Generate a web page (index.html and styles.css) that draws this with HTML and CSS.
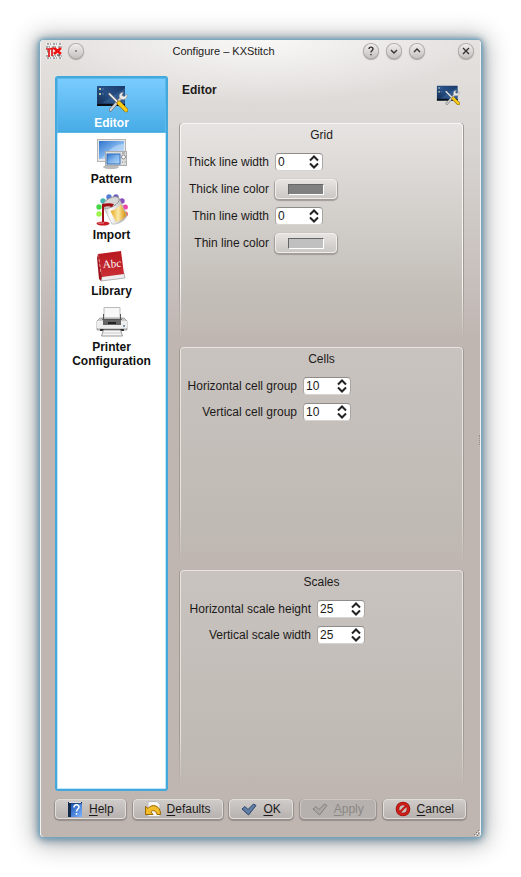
FILE: index.html
```html
<!DOCTYPE html>
<html lang="en">
<head>
<meta charset="utf-8">
<title>Configure – KXStitch</title>
<link rel="stylesheet" href="styles.css">
</head>
<body>
<svg class="defs" aria-hidden="true">
  <defs>
    <linearGradient id="screen" x1="0" y1="1" x2="1" y2="0"><stop offset="0" stop-color="#142c4c"/><stop offset=".5" stop-color="#264f86"/><stop offset="1" stop-color="#1a3a68"/></linearGradient>
    <linearGradient id="display" x1="0" y1="0" x2="1" y2="1"><stop offset="0" stop-color="#2f74cc"/><stop offset=".5" stop-color="#7fb4ec"/><stop offset="1" stop-color="#b4d8fa"/></linearGradient>
    <linearGradient id="gold" x1="0" y1="0" x2="1" y2="0"><stop offset="0" stop-color="#e9a51a"/><stop offset=".5" stop-color="#fbe9a8"/><stop offset="1" stop-color="#d99000"/></linearGradient>
    <linearGradient id="can" x1="0" y1="0" x2="1" y2="0"><stop offset="0" stop-color="#b5b5b5"/><stop offset=".3" stop-color="#ffffff"/><stop offset="1" stop-color="#a5a5a5"/></linearGradient>
    <linearGradient id="red" x1="0" y1="0" x2="0" y2="1"><stop offset="0" stop-color="#b81820"/><stop offset="1" stop-color="#c92f35"/></linearGradient>
    <linearGradient id="blue" x1="0" y1="0" x2="1" y2="1"><stop offset="0" stop-color="#1c54b4"/><stop offset="1" stop-color="#7db4ff"/></linearGradient>
    <symbol id="tools" viewBox="0 0 32 32">
      <rect x="1" y="4" width="28" height="20" fill="url(#screen)"/>
      <path d="M6 21 29 6v15z" fill="#4174ac" opacity=".4"/>
      <rect x="1" y="22" width="28" height="2" fill="#0a0d14"/>
      <path d="M3 7h2M3 12h2" stroke="#b5c6a8" stroke-width="2"/><path d="M6 7h2M6 12h2" stroke="#587ca8"/>
      <path d="M14.500 28 25 16" stroke="#5d6063" stroke-width="3.400" stroke-linecap="round"/>
      <path d="M14.500 28 25 16" stroke="#cfd1d2" stroke-width="2.200" stroke-linecap="round"/>
      <path d="M27.500 10.500c-3-.5-5 2-4 5 1 2.500 5 3 7 .500 1-1.500.800-3 .300-4l-2.500 2.500-2.500-1.200z" fill="#e8eaeb" stroke="#85898c" stroke-width=".6"/>
      <path d="m13.500 12 10 10" stroke="#777" stroke-width="2.600" stroke-linecap="round"/><path d="m13.500 12 10 10" stroke="#f5f5f5" stroke-width="1.400" stroke-linecap="round"/>
      <path d="m23 21 7 7" stroke="#8a6500" stroke-width="4.500" stroke-linecap="round"/>
      <path d="m23 21 7 7" stroke="#f8cb16" stroke-width="3.200" stroke-linecap="round"/>
    </symbol>
  </defs>
</svg>
<main class="window">
  <header class="titlebar">
    <svg class="app-icon" viewBox="0 0 16 16" aria-hidden="true">
      <rect width="16" height="16" fill="#eee"/>
      <path d="M1 1h15M0 4h16M0 13h16M1 15h15" stroke="#666" stroke-dasharray="2 1 1 2"/>
      <path d="M2 0v16M8 0v16M14 0v16" stroke="#999" stroke-dasharray="1 2"/>
      <path d="M0 6h4M3 6v8M6 5v8M4 6l4-1" stroke="#df1a1c" stroke-width="1.700" fill="none"/>
      <path d="m8 5 7 6M8 11l7-6" stroke="#f01010" stroke-width="2.600"/>
      <path d="M1 8h1M11 12h3" stroke="#333"/>
    </svg>
    <button class="round" aria-label="Window menu"><svg viewBox="0 0 14 14"><circle cx="7" cy="7" r=".8"/></svg></button>
    <h1 class="title">Configure – KXStitch</h1>
    <div class="controls">
      <button class="round" aria-label="Context help"><svg viewBox="0 0 14 14"><path class="line" d="M5 5C5 2.500 9 2.500 9 5 9 6.500 7 6.500 7 8.500M7 10v1.200"/></svg></button>
      <button class="round" aria-label="Minimize"><svg viewBox="0 0 14 14"><path class="line" d="m4 6 3 3 3-3"/></svg></button>
      <button class="round" aria-label="Maximize"><svg viewBox="0 0 14 14"><path class="line" d="m4 8 3-3 3 3"/></svg></button>
    </div>
    <button class="round" aria-label="Close"><svg viewBox="0 0 14 14"><path class="line" d="m4 4 6 6M10 4l-6 6"/></svg></button>
  </header>

  <div class="content">
    <nav class="sidebar" aria-label="Pages">
      <a class="page current" href="#editor" aria-current="page">
        <svg class="page-icon" viewBox="0 0 32 32" aria-hidden="true"><use href="#tools"/></svg>Editor</a>
      <a class="page" href="#pattern">
        <svg class="page-icon" viewBox="0 0 32 32" aria-hidden="true">
          <ellipse cx="15" cy="29" rx="8" ry="2" fill="#bbb"/>
          <path d="M11 23h8v5h-8z" fill="#c8c8c8"/>
          <rect x="1.500" y="1.500" width="28" height="22" fill="#e8e8e8" stroke="#b5b5b5"/>
          <rect x="3" y="3" width="25" height="18" fill="url(#display)"/>
          <path d="M3 21c8-2 9-14 25-15v15z" fill="#fff" opacity=".3"/>
          <rect x="9.500" y="13.500" width="21" height="14" fill="#ddd" stroke="#adadad"/>
          <rect x="11" y="16" width="13" height="10" fill="url(#display)" stroke="#3671ba"/>
          <circle cx="27.500" cy="19" r="2" fill="#fff" stroke="#888"/><path d="M26 24h1M28.500 24h1M26 15h3" stroke="#888"/>
        </svg>Pattern</a>
      <a class="page" href="#import">
        <svg class="page-icon" viewBox="0 0 32 32" aria-hidden="true">
          <circle cx="3" cy="20" r="2.700" fill="#9cf44c"/><circle cx="3" cy="13" r="2.700" fill="#46d74b"/><circle cx="7" cy="7" r="2.700" fill="#45b5b0"/><circle cx="13" cy="3" r="2.700" fill="#527bd6"/><circle cx="20" cy="3" r="2.700" fill="#705bc0"/><circle cx="26" cy="7" r="2.700" fill="#8d50bc"/><circle cx="29.300" cy="13" r="2.600" fill="#f044a8"/><circle cx="29.300" cy="20" r="2.600" fill="#ef4d4a"/>
          <path d="M7 12 23 4l8 17c-1 5-9 10-15 9z" fill="url(#can)" stroke="#aaa" stroke-width=".6"/>
          <path d="M14.500 17C19 16 23 13 25 10l5 11c-2 4-6 6-10 7z" fill="url(#gold)"/>
          <ellipse cx="15" cy="8.500" rx="9" ry="4.500" transform="rotate(-28 15 8.500)" fill="#d8d8d8" stroke="#8b8b8b" stroke-width=".8"/>
          <path d="M6 10c4-1 9-1 12 0l-2 3c-3-1-5-1-8 0v15H6z" fill="#a10f16"/>
          <ellipse cx="7" cy="29.500" rx="6.500" ry="2" fill="#c71c22"/><path d="M2 29h6" stroke="#fff" opacity=".5"/>
        </svg>Import</a>
      <a class="page" href="#library">
        <svg class="page-icon" viewBox="0 0 32 32" aria-hidden="true">
          <path d="M6 26 28 23l1 5L5 31z" fill="#eee" stroke="#999" stroke-width=".7"/>
          <path d="m2 4 23-3 3 23-22 3z" fill="url(#red)"/>
          <path d="m2 4 4 22-1 5-2-2L1 8z" fill="#a1141b"/><path d="m3 9 2 15" stroke="#e49a9a" stroke-dasharray="3 2"/>
          <text class="abc" x="7" y="18" transform="rotate(-4 7 18)">Abc</text>
        </svg>Library</a>
      <a class="page" href="#printer">
        <svg class="page-icon" viewBox="0 0 32 32" aria-hidden="true">
          <path d="M8 1.500h16V13H8z" fill="#f7f7f7" stroke="#bbb"/>
          <path d="M4 12h24l3 3v9H1v-9z" fill="#ccc" stroke="#888" stroke-width=".7"/>
          <path d="M7 12V8h1v5h16V8h1v4l1 2H6z" fill="#555"/>
          <path d="M1 15h30v7H1z" fill="#eee"/><path d="M7 14h18v5H7z" fill="#666"/><path d="M12 17h8" stroke="#222" stroke-width="2"/>
          <circle cx="28" cy="20" r="1" fill="#678"/>
          <path d="M4 23h24v2H4z" fill="#333"/><path d="M7.500 24h17l2 6h-21z" fill="#f6f6f6" stroke="#999"/><path d="M7 27h18" stroke="#ccc"/>
        </svg>Printer Configuration</a>
    </nav>

    <section class="editor" id="editor">
      <div class="heading">
        <h2>Editor</h2>
        <svg class="heading-icon" viewBox="0 3 32 27" aria-hidden="true"><use href="#tools" width="32" height="32"/></svg>
      </div>
      <fieldset class="group">
        <legend>Grid</legend>
        <div class="fields grid-fields">
          <label for="thick-width">Thick line width</label>
          <input class="spin" id="thick-width" type="number" value="0">
          <label for="thick-color">Thick line color</label>
          <button class="color" id="thick-color" aria-label="Thick line color"><span class="swatch thick"></span></button>
          <label for="thin-width">Thin line width</label>
          <input class="spin" id="thin-width" type="number" value="0">
          <label for="thin-color">Thin line color</label>
          <button class="color" id="thin-color" aria-label="Thin line color"><span class="swatch thin"></span></button>
        </div>
      </fieldset>
      <fieldset class="group shaded">
        <legend>Cells</legend>
        <div class="fields cell-fields">
          <label for="cell-h">Horizontal cell group</label>
          <input class="spin" id="cell-h" type="number" value="10">
          <label for="cell-v">Vertical cell group</label>
          <input class="spin" id="cell-v" type="number" value="10">
        </div>
      </fieldset>
      <fieldset class="group shaded">
        <legend>Scales</legend>
        <div class="fields scale-fields">
          <label for="scale-h">Horizontal scale height</label>
          <input class="spin" id="scale-h" type="number" value="25">
          <label for="scale-v">Vertical scale width</label>
          <input class="spin" id="scale-v" type="number" value="25">
        </div>
      </fieldset>
    </section>
  </div>

  <footer class="actions">
    <button class="action"><svg viewBox="0 0 16 16" aria-hidden="true"><path d="M1 1h14v15H1z" fill="#142a4b"/><path d="M4 2.500h11V16H4z" fill="url(#blue)"/><path d="M2 1.500h12" stroke="#ddd"/><path d="M7 6.500c0-3.500 5-3.500 5-.5 0 2-2.500 2-2.500 4.500M9.500 12v1.800" fill="none" stroke="#fff" stroke-width="1.500"/></svg><span><u>H</u>elp</span></button>
    <button class="action"><svg viewBox="0 0 16 16" aria-hidden="true"><path d="M3 .5h9l3 3v12H3z" fill="#f6f6f6" stroke="#bbb"/><path d="M.5 5.500v8H8L5.800 11C8 8.500 11 9.500 12 13.500h3.500C16 4.500 7 2 3 7.500z" fill="#f1bd2a" stroke="#9b6700"/></svg><span><u>D</u>efaults</span></button>
    <button class="action"><svg viewBox="0 0 16 16" aria-hidden="true"><path d="m1 8 3-2.500 3 3L12.500 3 15 4.500 7.500 14z" fill="#5f7da5" stroke="#2d4569"/></svg><span><u>O</u>K</span></button>
    <button class="action" disabled><svg viewBox="0 0 16 16" aria-hidden="true"><path d="m1 8 3-2.500 3 3L12.500 3 15 4.500 7.500 14z" fill="#aaa6a3" stroke="#858280"/></svg><span><u>A</u>pply</span></button>
    <button class="action"><svg viewBox="0 0 16 16" aria-hidden="true"><circle cx="8" cy="8" r="5.500" fill="#c8bebb" stroke="#8d0f0b" stroke-width="3.600"/><circle cx="8" cy="8" r="5.500" fill="none" stroke="#ce1e17" stroke-width="2.400"/><path d="m4.500 11.500 7-7" stroke="#c51a14" stroke-width="2.200"/></svg><span><u>C</u>ancel</span></button>
  </footer>
  <span class="edge-grip"></span>
  <svg class="corner-grip" viewBox="0 0 6 6" aria-hidden="true"><path d="M4 0h1v1H4zM2 2h1v1H2zM4 3h1v1H4zM0 4h1v1H0zM3 5h1v1H3z" fill="#857c79"/><path d="M5 1h1v1H5zM3 3h1v1H3zM1 5h1v1H1z" fill="#fff"/></svg>
</main>
</body>
</html>
```
FILE: styles.css
```css
* { box-sizing: border-box; }
body {
  margin: 0;
  padding: 40px;
  min-height: 100vh;
  display: flex;
  background: #fff;
  color: #1c1a19;
  font: 12px/14px "Liberation Sans", Arial, sans-serif;
}
button, input { font: inherit; color: inherit; margin: 0; }
.defs { position: absolute; width: 0; height: 0; }
.window {
  position: relative;
  flex: 1;
  display: flex;
  flex-direction: column;
  padding: 0 14px 18px;
  border-radius: 4px;
  border-left: 1px solid #f3f1f0;
  border-right: 1px solid #f3f1f0;
  background:
    radial-gradient(ellipse 210px 64px at 50% 0, rgba(255, 255, 255, .75), rgba(255, 255, 255, 0)),
    linear-gradient(#e5e2e0, #d8d4d1 110px, #bfb6b2 300px);
  box-shadow: 0 0 3px 1px #71a9c6, 0 1px 8px 2px rgba(70, 115, 142, .75), 0 2px 24px 6px rgba(0, 0, 0, .3);
}
.titlebar {
  display: flex;
  align-items: center;
  height: 22px;
  margin: 0 -9px;
}
.app-icon { width: 16px; height: 16px; }
.title {
  flex: 1;
  margin: 0;
  font-size: 11px;
  font-weight: 400;
  text-align: center;
}
.round {
  width: 14px;
  height: 14px;
  padding: 0;
  border: 0;
  border-radius: 50%;
  background: linear-gradient(#efedec, #c6c2c0);
  box-shadow: 0 0 0 1px #b3aeab, 0 1px 1px 1px #aaa5a2;
}
.round svg { display: block; fill: #333; }
.round .line { fill: none; stroke: #333; stroke-width: 1.4; }
.app-icon + .round { margin-left: 7px; }
.titlebar > .round:last-child { margin: 0 2px 0 35px; }
.controls { display: flex; gap: 9px; }
.content { flex: 1; display: flex; gap: 12px; padding-top: 14px; }
.sidebar {
  width: 113px;
  border: 2px solid #43a9dc;
  border-radius: 3px;
  background: #fff;
  box-shadow: inset 0 0 0 1px #bfe5fa;
}
.page {
  display: flex;
  flex-direction: column;
  align-items: center;
  gap: 2px;
  padding: 5px 12px 3px;
  color: #111;
  font-weight: 700;
  text-align: center;
  text-decoration: none;
}
.page.current {
  padding-top: 4px;
  color: #fff;
  background: linear-gradient(#7accff, #46abe5);
  box-shadow: inset 0 0 0 1px #5db9ea, inset 0 -2px #43a9dc;
}
.page-icon { width: 32px; height: 32px; }
.abc { font: 11px "Liberation Serif", serif; fill: #fff; }
.editor {
  flex: 1;
  display: flex;
  flex-direction: column;
  gap: 8px;
  margin-right: 3px;
  padding-bottom: 5px;
}
.heading {
  display: flex;
  justify-content: space-between;
  align-items: flex-start;
  height: 39px;
  padding: 7px 3px 0 2px;
}
h2 { margin: 0; font-size: 12px; line-height: 14px; }
.heading-icon { width: 24px; height: 20px; margin-top: 2px; }
.group {
  position: relative;
  flex: 1 1 0;
  min-width: 0;
  margin: 0;
  padding: 5px;
  border: 0;
  border-radius: 4px;
  background: linear-gradient(rgba(255, 255, 255, .3), rgba(190, 190, 180, .35) 80%, rgba(190, 185, 180, 0));
}
.group.shaded { background: linear-gradient(rgba(210, 208, 205, .5), rgba(192, 190, 182, .55) 80%, rgba(190, 185, 180, 0)); }
.group::before {
  content: "";
  position: absolute;
  inset: 0;
  border: 1px solid #f8f7f6;
  border-radius: 4px;
  border-bottom: 0;
  box-shadow: -1px 0 #a19894, 1px 0 #a19894, 0 -1px #c1bbb7;
  mask-image: linear-gradient(#000, #000 75%, transparent);
  mask-clip: no-clip;
  pointer-events: none;
}
.group.shaded::before { border-color: #e6e3e1; }
legend {
  float: left;
  width: 100%;
  padding: 0;
  text-align: center;
}
.fields {
  clear: both;
  display: grid;
  justify-content: start;
  align-items: center;
  gap: 6px;
  padding-top: 10px;
}
.fields label { text-align: right; white-space: nowrap; }
.grid-fields { grid-template-columns: minmax(84px, auto) auto; }
.cell-fields { grid-template-columns: minmax(112px, auto) auto; }
.scale-fields { grid-template-columns: minmax(126px, auto) auto; }
.spin {
  appearance: textfield;
  width: 48px;
  height: 18px;
  margin: 1px 0;
  padding: 0 2px;
  border: 1px solid #aaa6a3;
  border-top-color: #8f8b89;
  border-bottom-color: #d7d4d2;
  border-radius: 4px;
  background: #fff url("data:image/svg+xml,%3Csvg xmlns='http://www.w3.org/2000/svg' viewBox='0 0 10 14'%3E%3Cpath d='m1 5.500 4-4 4 4M1 8.500l4 4 4-4' fill='none' stroke='%23222' stroke-width='2'/%3E%3C/svg%3E") no-repeat right 3px center / 10px 14px;
}
.spin::-webkit-inner-spin-button { appearance: none; margin: 0; }
.color {
  display: grid;
  place-items: center;
  width: 62px;
  height: 20px;
  margin: 1px 0;
  padding: 0;
  border: 1px solid #f0eeed;
  border-radius: 4px;
  background: linear-gradient(#e6e3e1, #cbc7c4);
  box-shadow: 0 1px 1px 1px #a29b98;
}
.swatch {
  width: 36px;
  height: 11px;
  border: 1px solid #fff;
  border-top-color: #666;
  border-left-color: #666;
}
.thick { background: #808080; }
.thin { background: #c0c0c0; }
.actions { display: flex; justify-content: space-between; margin-top: 8px; }
.action {
  display: flex;
  align-items: center;
  gap: 6px;
  height: 20px;
  padding: 0 11px;
  border: 1px solid #e1dedc;
  border-radius: 4px;
  background: linear-gradient(#cfcbc9, #b7b2af);
  box-shadow: 0 1px 1px 1px #968e8b;
}
.action svg { width: 16px; height: 16px; }
.action u { text-underline-offset: 2px; }
.action:disabled { color: #8b8784; border-color: #ccc7c5; background: #b6b1ae; }
.edge-grip {
  position: absolute;
  right: 0;
  top: 50%;
  height: 10px;
  margin-top: -4px;
  border-right: 1px dotted #988f8b;
}
.corner-grip { position: absolute; right: 0; bottom: 1px; width: 6px; height: 6px; }
```
